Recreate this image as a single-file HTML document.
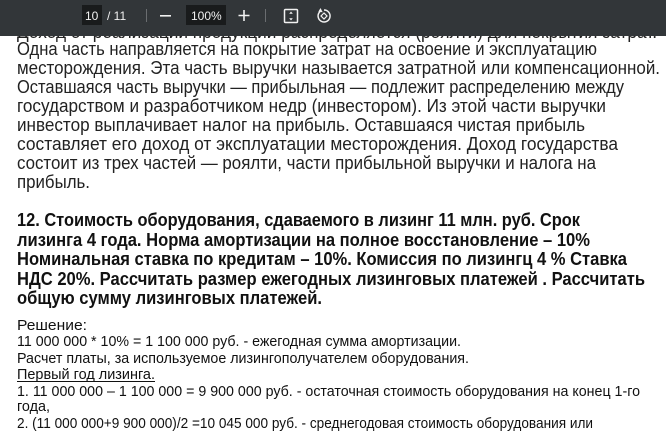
<!DOCTYPE html>
<html><head><meta charset="utf-8"><style>
html,body{margin:0;padding:0;width:666px;height:432px;overflow:hidden;background:#fff}
svg{display:block}
</style></head><body>
<svg width="666" height="432" xmlns="http://www.w3.org/2000/svg" font-family="Liberation Sans, Arial, sans-serif">
<rect width="666" height="432" fill="#fff"/>
<text x="17" y="38" font-size="18" fill="#222" textLength="640" lengthAdjust="spacingAndGlyphs">Доход от реализации продукции распределяется (роялти) для покрытия затрат.</text>
<rect width="666" height="36" fill="#323639"/>
<g font-size="12" fill="#f1f1f1">
<rect x="82" y="5" width="20" height="20" fill="#191b1c"/>
<text x="85" y="20">10</text>
<text x="107" y="20">/ 11</text>
<rect x="146" y="9" width="1" height="13" fill="#6a6d70"/>
<rect x="160" y="15" width="11" height="1.6" fill="#f1f1f1"/>
<rect x="186" y="5" width="40" height="20" fill="#191b1c"/>
<text x="191" y="20" font-size="12">100%</text>
<path d="M244 10v11M238.5 15.5h11" stroke="#f1f1f1" stroke-width="1.6"/>
<rect x="265" y="9" width="1" height="13" fill="#6a6d70"/>
<rect x="284.5" y="9.5" width="13" height="13" fill="none" stroke="#f1f1f1" stroke-width="1.5" rx="1"/>
<path d="M291 11.5l-1.8 2.3h3.6zM291 20.5l-1.8-2.3h3.6z" fill="#f1f1f1"/>
<path d="M324 10a6 6 0 1 1-4 1.6" fill="none" stroke="#f1f1f1" stroke-width="1.5"/>
<path d="M320.5 8l-2.2 3.8 4.4.4z" fill="#f1f1f1"/>
<path d="M324 13l-3 3 3 3 3-3z" fill="none" stroke="#f1f1f1" stroke-width="1.2"/>
</g>
<g font-size="18" fill="#222">
<text x="17" y="55" textLength="580" lengthAdjust="spacingAndGlyphs">Одна часть направляется на покрытие затрат на освоение и эксплуатацию</text>
<text x="17" y="74" textLength="643" lengthAdjust="spacingAndGlyphs">месторождения. Эта часть выручки называется затратной или компенсационной.</text>
<text x="17" y="93" textLength="607" lengthAdjust="spacingAndGlyphs">Оставшаяся часть выручки — прибыльная — подлежит распределению между</text>
<text x="17" y="112" textLength="589" lengthAdjust="spacingAndGlyphs">государством и разработчиком недр (инвестором). Из этой части выручки</text>
<text x="17" y="131" textLength="568" lengthAdjust="spacingAndGlyphs">инвестор выплачивает налог на прибыль. Оставшаяся чистая прибыль</text>
<text x="17" y="150" textLength="601" lengthAdjust="spacingAndGlyphs">составляет его доход от эксплуатации месторождения. Доход государства</text>
<text x="17" y="169" textLength="579" lengthAdjust="spacingAndGlyphs">состоит из трех частей — роялти, части прибыльной выручки и налога на</text>
<text x="17" y="188" textLength="73" lengthAdjust="spacingAndGlyphs">прибыль.</text>
</g>
<g font-size="18" font-weight="bold" fill="#111">
<text x="17" y="226" textLength="563" lengthAdjust="spacingAndGlyphs">12. Стоимость оборудования, сдаваемого в лизинг 11 млн. руб. Срок</text>
<text x="17" y="246" textLength="573" lengthAdjust="spacingAndGlyphs">лизинга 4 года. Норма амортизации на полное восстановление – 10%</text>
<text x="17" y="265" textLength="610" lengthAdjust="spacingAndGlyphs">Номинальная ставка по кредитам – 10%. Комиссия по лизингц 4 % Ставка</text>
<text x="17" y="285" textLength="628" lengthAdjust="spacingAndGlyphs">НДС 20%. Рассчитать размер ежегодных лизинговых платежей . Рассчитать</text>
<text x="17" y="304" textLength="305" lengthAdjust="spacingAndGlyphs">общую сумму лизинговых платежей.</text>
</g>
<g font-size="15" fill="#111">
<text x="17" y="330" textLength="70" lengthAdjust="spacingAndGlyphs">Решение:</text>
<text x="17" y="346" textLength="444" lengthAdjust="spacingAndGlyphs">11 000 000 * 10% = 1 100 000 руб. - ежегодная сумма амортизации.</text>
<text x="17" y="363" textLength="452" lengthAdjust="spacingAndGlyphs">Расчет платы, за используемое лизингополучателем оборудования.</text>
<text x="17" y="379" textLength="138" lengthAdjust="spacingAndGlyphs">Первый год лизинга.</text>
<rect x="17" y="381" width="138" height="1" fill="#111"/>
<text x="17" y="396" textLength="623" lengthAdjust="spacingAndGlyphs">1. 11 000 000 – 1 100 000 = 9 900 000 руб. - остаточная стоимость оборудования на конец 1-го</text>
<text x="17" y="411" textLength="33" lengthAdjust="spacingAndGlyphs">года,</text>
<text x="17" y="428" textLength="576" lengthAdjust="spacingAndGlyphs">2. (11 000 000+9 900 000)/2 =10 045 000 руб. - среднегодовая стоимость оборудования или</text>
</g>
</svg>
</body></html>
